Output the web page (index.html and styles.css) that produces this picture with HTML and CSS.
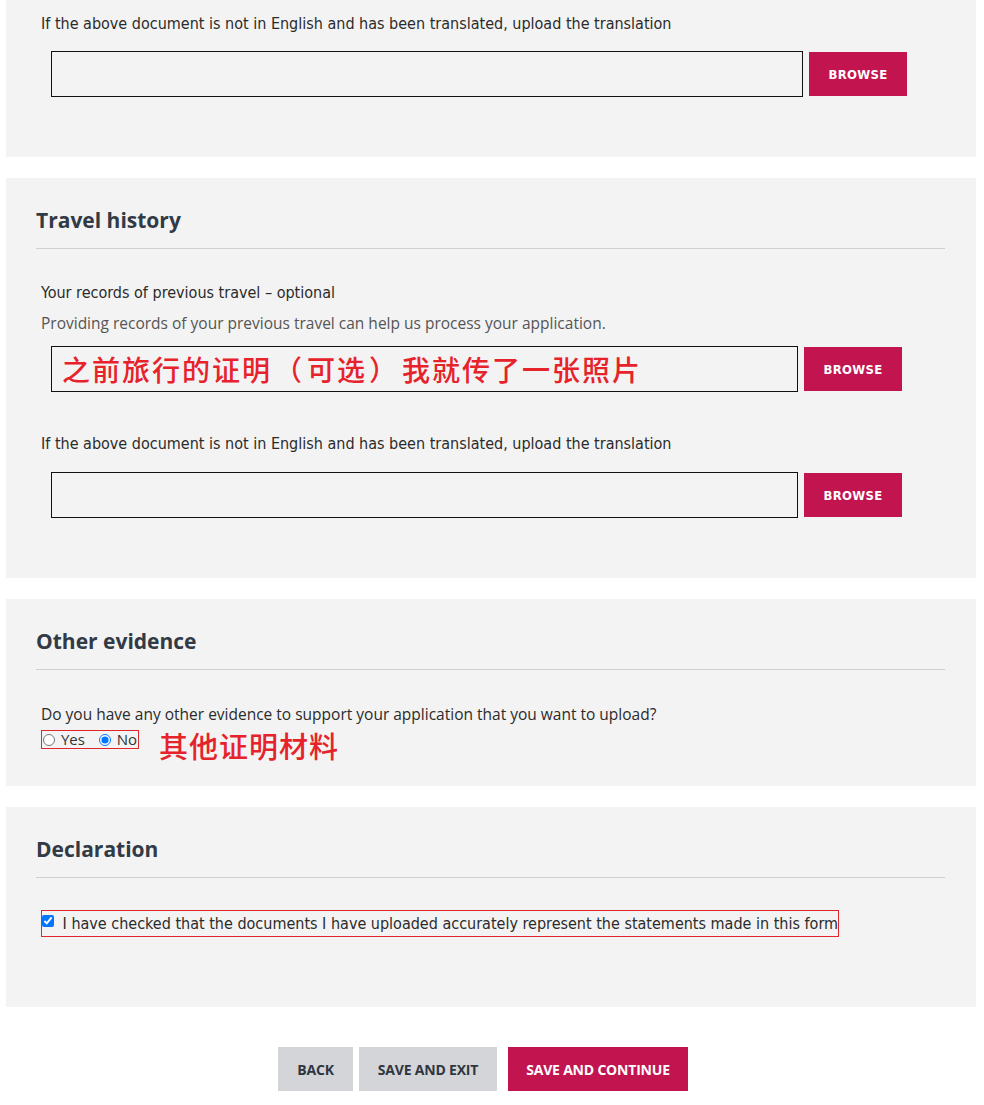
FILE: index.html
```html
<!DOCTYPE html>
<html>
<head>
  <title>Supporting documents</title>
  <link rel="stylesheet" href="styles.css">
</head>
<body>
  <div id="page">
    <div class="panel panel-first">
      <div class="field">
        <label class="field-label">If the above document is not in English and has been translated, upload the translation</label>
        <div class="upload">
          <div class="upload-box wide"></div>
          <button class="browse">BROWSE</button>
        </div>
      </div>
    </div>

    <div class="panel">
      <h2 class="panel-title">Travel history</h2>
      <div class="field">
        <label class="field-label">Your records of previous travel – optional</label>
        <p class="help">Providing records of your previous travel can help us process your application.</p>
        <div class="upload">
          <div class="upload-box"><span class="note note-in">之前旅行的证明<span class="paren">（</span>可选<span class="paren">）</span>我就传了一张照片</span></div>
          <button class="browse">BROWSE</button>
        </div>
      </div>
      <div class="field field-next">
        <label class="field-label">If the above document is not in English and has been translated, upload the translation</label>
        <div class="upload">
          <div class="upload-box"></div>
          <button class="browse">BROWSE</button>
        </div>
      </div>
    </div>

    <div class="panel panel-short">
      <h2 class="panel-title">Other evidence</h2>
      <div class="field">
        <label class="question">Do you have any other evidence to support your application that you want to upload?</label>
        <div class="radio-line">
          <div class="marked radios">
            <label><input type="radio" name="other"> Yes</label>
            <label><input type="radio" name="other" checked> No</label>
          </div>
          <span class="note note-out">其他证明材料</span>
        </div>
      </div>
    </div>

    <div class="panel panel-decl">
      <h2 class="panel-title">Declaration</h2>
      <div class="field">
        <label class="marked check"><input type="checkbox" checked> I have checked that the documents I have uploaded accurately represent the statements made in this form</label>
      </div>
    </div>

    <div class="actions">
      <button class="btn btn-grey btn-back">BACK</button>
      <button class="btn btn-grey btn-exit">SAVE AND EXIT</button>
      <button class="btn btn-main">SAVE AND CONTINUE</button>
    </div>
  </div>
</body>
</html>
```

FILE: styles.css
```css
body {
  margin: 0;
  background: #fff;
  font-family: "Open Sans", "Noto Sans", sans-serif;
  color: #333;
}
#page {
  padding: 0 8px 0 6px;
}
.panel {
  background: #f3f3f3;
  padding: 29px 31px 60px 30px;
  margin-bottom: 21px;
}
.panel-first {
  padding-top: 14px;
}
.panel-short {
  padding-bottom: 26px;
}
.panel-decl {
  padding-bottom: 70px;
}
.panel-title {
  margin: 0;
  font-size: 21px;
  line-height: 26px;
  font-weight: 700;
  color: #313a45;
  padding-bottom: 15px;
  border-bottom: 1px solid #cfcfcf;
  margin-bottom: 34px;
}
.field {
  margin-left: 5px;
}
.field-next {
  margin-top: 42px;
}
.field-label,
.question {
  display: block;
  font-family: "Liberation Sans Narrow", "DejaVu Sans Condensed", "Roboto", sans-serif;
  font-size: 16px;
  line-height: 20px;
  color: #2b2b2b;
}
.question {
  font-family: "Open Sans", sans-serif;
  font-size: 15.5px;
}
.help {
  margin: 10px 0 0;
  font-size: 15.5px;
  line-height: 20px;
  color: #555;
}
.upload {
  display: flex;
  align-items: center;
  margin: 17px 0 0 10px;
}
.field-next .upload {
  margin-top: 18px;
}
.help + .upload {
  margin-top: 13px;
}
.upload-box {
  width: 745px;
  height: 44px;
  border: 1px solid #111;
  background: #f3f3f3;
  display: flex;
  align-items: center;
}
.upload-box.wide {
  width: 750px;
}
.browse {
  margin-left: 6px;
  width: 98px;
  height: 44px;
  border: none;
  background: #c2144f;
  color: #fff;
  font-family: "DejaVu Sans Condensed", "Roboto", sans-serif;
  font-weight: 700;
  font-size: 13px;
  letter-spacing: 0.3px;
}
.note {
  font-family: "Noto Sans CJK SC", sans-serif;
  color: #e6222b;
  font-size: 28px;
  font-weight: 500;
  line-height: 34px;
  letter-spacing: 1px;
}
.note-in {
  margin-left: 10px;
  letter-spacing: 2px;
}
.paren {
  margin: 0 3px 0 2px;
}
.note-out {
  font-size: 29px;
  line-height: 30px;
  margin-left: 20px;
}
.radio-line {
  display: flex;
  align-items: flex-start;
  margin-top: 6px;
}
.marked {
  border: 1px solid #e0262b;
}
.radios {
  display: flex;
  gap: 14px;
  padding: 0 1px;
  font-size: 15px;
  line-height: 17px;
  color: #333;
}
.radios input {
  margin: 0 2px 0 0;
  width: 12px;
  height: 12px;
  vertical-align: -1px;
}
.check {
  display: inline-block;
  margin-top: -3px;
  padding: 4px 0 4px 0;
  font-family: "Liberation Sans Narrow", "DejaVu Sans Condensed", sans-serif;
  font-size: 16px;
  line-height: 17px;
  color: #2b2b2b;
}
.check input {
  margin: 0 4px 0 0;
  width: 12px;
  height: 12px;
  vertical-align: top;
}
.actions {
  display: flex;
  justify-content: center;
  padding: 19px 16px 15px 0;
}
.btn {
  height: 44px;
  border: none;
  font-family: "Open Sans", sans-serif;
  font-weight: 700;
  font-size: 14px;
  letter-spacing: -0.2px;
}
.btn-grey {
  background: #d4d5d8;
  color: #2f3640;
}
.btn-back {
  width: 75px;
}
.btn-exit {
  width: 138px;
  margin-left: 6px;
}
.btn-main {
  width: 180px;
  margin-left: 11px;
  background: #c2144f;
  color: #fff;
}
```
